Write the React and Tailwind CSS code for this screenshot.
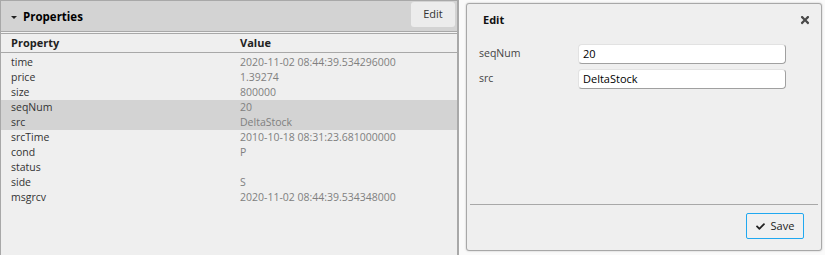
import React from "react";
import { FaTimes, FaCheck } from "react-icons/fa";

const rows = [
  ["time", "2020-11-02 08:44:39.534296000"],
  ["price", "1.39274"],
  ["size", "800000"],
  ["seqNum", "20", true],
  ["src", "DeltaStock", true],
  ["srcTime", "2010-10-18 08:31:23.681000000"],
  ["cond", "P"],
  ["status", ""],
  ["side", "S"],
  ["msgrcv", "2020-11-02 08:44:39.534348000"],
];

export default function App() {
  return (
    <div className="flex w-[825px] h-[255px] bg-[#fafafa] font-['Open_Sans',sans-serif] text-[10.5px] overflow-hidden">
      {/* Left panel */}
      <div className="w-[459px] h-full flex flex-col border-l border-t border-r-2 border-[#a8a8a8] bg-[#efefef]">
        <div className="h-[31px] flex items-start justify-between bg-[#d3d3d3] border-b border-[#a8a8a8]">
          <div className="flex items-center h-[30px] pl-[10px] pt-[2px]">
            <div className="w-0 h-0 border-l-[3px] border-r-[3px] border-t-[3px] border-l-transparent border-r-transparent border-t-[#222] mr-[6px]" />
            <span className="font-bold text-[11.5px] text-black">Properties</span>
          </div>
          <div className="mt-[1px] mr-[2px] w-[44px] h-[25px] rounded-[3px] bg-[#ececec] flex items-center justify-center text-[11px] text-[#333]">
            Edit
          </div>
        </div>
        <div className="h-px bg-[#f4f4f4]" />
        <div className="h-[20px] flex items-center border-t border-b border-[#a8a8a8] font-bold text-[11px] text-[#222]">
          <div className="w-[239px] pl-[10px]">Property</div>
          <div>Value</div>
        </div>
        <div className="pt-[2px] flex flex-col">
          {rows.map(([k, v, hl]) => (
            <div key={k} className={`h-[15px] flex items-center ${hl ? "bg-[#d3d3d3]" : ""}`}>
              <div className="w-[239px] pl-[10px] text-[#333]">{k}</div>
              <div className="text-[#808080]">{v}</div>
            </div>
          ))}
        </div>
      </div>

      {/* Dialog */}
      <div className="ml-[7px] mt-[3px] w-[356px] h-[248px] flex flex-col border border-[#a8a8a8] rounded-[3px] bg-[#efefef] shadow-[0_0_2px_rgba(0,0,0,0.25)]">
        <div className="h-[32px] flex items-center justify-between pl-[16px] pr-[10px]">
          <span className="font-bold text-[11px] text-[#111]">Edit</span>
          <FaTimes className="w-[12px] h-[12px] text-[#4a4a4a]" />
        </div>
        <div className="flex-1 flex flex-col gap-[5px] pt-[8px] pl-[12px]">
          {[
            ["seqNum", "20"],
            ["src", "DeltaStock"],
          ].map(([k, v]) => (
            <div key={k} className="flex items-center h-[20px]">
              <div className="w-[99px] text-[#444]">{k}</div>
              <div className="w-[208px] h-[20px] flex items-center pl-[4px] bg-white rounded-[4px] border border-[#e2e2e2] border-r-[#a0a0a0] border-b-[#a0a0a0] text-[11px] text-black">
                {v}
              </div>
            </div>
          ))}
        </div>
        <div className="mx-[3px] border-t border-[#a8a8a8] h-[46px] flex items-start justify-end pt-[8px] pr-[14px]">
          <div className="w-[58px] h-[26px] flex items-center justify-center gap-[6px] border border-[#20a8f0] rounded-[2px] bg-[#f0f0f0] text-[11px] text-[#222]">
            <FaCheck className="w-[9px] h-[9px] text-[#222]" />
            <span>Save</span>
          </div>
        </div>
      </div>
    </div>
  );
}
